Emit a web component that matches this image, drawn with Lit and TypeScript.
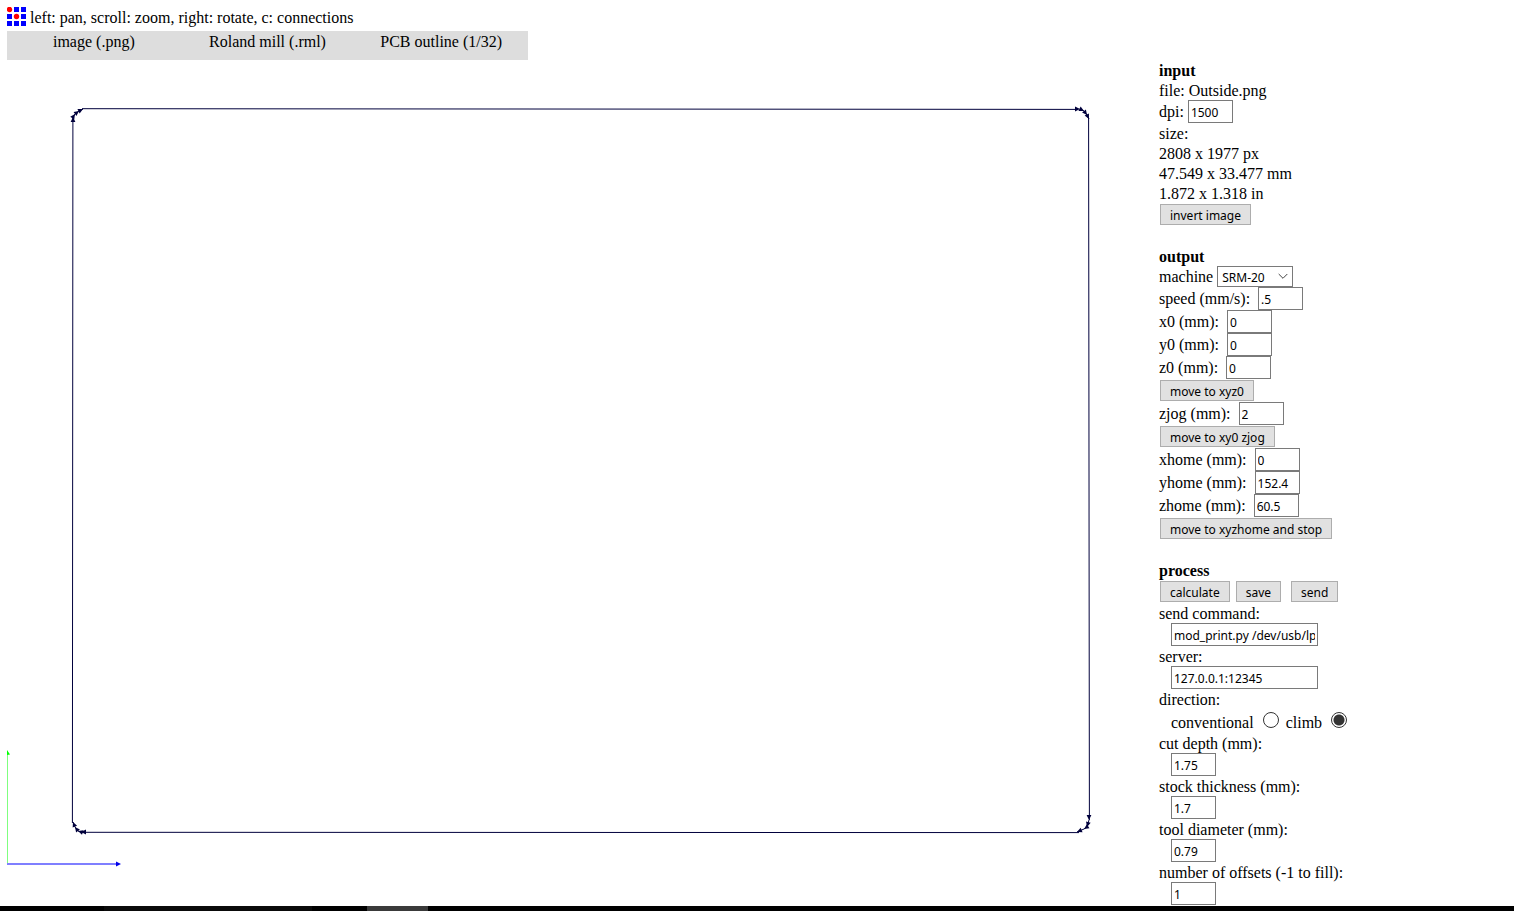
import { LitElement, html, css, svg } from "lit";
import { customElement, state } from "lit/decorators.js";

type Point = [number, number];

const LOGO_CELLS = [0, 1, 2, 3, 4, 5, 6, 7, 8];

// Toolpath corners in travel order: up the left side, then clockwise.
const CORNERS: Point[][] = [
  [[73, 117], [75, 114], [79, 111], [83, 109]],
  [[1080, 109], [1084, 111], [1087, 115], [1089, 119]],
  [[1089, 820], [1087, 827], [1084, 829], [1077, 832]],
  [[81, 832], [78, 831], [75, 827], [73, 822]],
];

function head(from: Point, to: Point, size = 4, half = 2) {
  const dx = to[0] - from[0];
  const dy = to[1] - from[1];
  const len = Math.hypot(dx, dy) || 1;
  const ux = dx / len;
  const uy = dy / len;
  const bx = to[0] - ux * size;
  const by = to[1] - uy * size;
  return `${to[0]},${to[1]} ${bx - uy * half},${by + ux * half} ${bx + uy * half},${by - ux * half}`;
}

@customElement("mods-toolpath")
export class ModsToolpath extends LitElement {
  static styles = css`
    :host { display: block; }
    svg { display: block; width: 100%; height: auto; }
    .path { stroke: #00003c; stroke-width: 1; fill: none; }
    .head { fill: #00003c; }
    .up { stroke: #7fff7f; }
    .up-head { fill: #00ff00; }
    .across { stroke: #7f7fff; stroke-width: 2; }
    .across-head { fill: #0000e8; }
  `;

  render() {
    const points = CORNERS.flat();
    const closed = [...points, points[0]];
    return html`
      <svg viewBox="7 60 1152 846" role="img" aria-label="toolpath">
        <line class="up" x1="7.5" y1="864" x2="7.5" y2="752"></line>
        <polygon class="up-head" points="7,750 10,754.5 7,755"></polygon>
        <line class="across" x1="7" y1="864" x2="118" y2="864"></line>
        <polygon class="across-head" points="121,864 116,861.5 116,866.5"></polygon>
        <polyline class="path" points="82,108.7 1078,109.4"></polyline>
        <polyline class="path" points="1088.6,118 1089.4,820"></polyline>
        <polyline class="path" points="1079,832.6 82,832.3"></polyline>
        <polyline class="path" points="72.4,823 72.9,118"></polyline>
        ${CORNERS.map((c) => svg`<polyline class="path" points=${c.map((p) => p.join(",")).join(" ")}></polyline>`)}
        ${points.map((p, i) => {
          const prev = closed[(i + points.length - 1) % points.length];
          return svg`<polygon class="head" points=${head(prev, p, 5, 2.4)}></polygon>`;
        })}
      </svg>
    `;
  }
}

@customElement("app-root")
export class AppRoot extends LitElement {
  static styles = css`
    :host {
      display: flex;
      flex-direction: column;
      height: 100vh;
      overflow: hidden;
      background: #fff;
      color: #000;
      font: 16px/20px "Liberation Serif", "Times New Roman", serif;
    }
    * { box-sizing: border-box; }
    header { padding: 7px 7px 0; }
    .hint { display: flex; gap: 4px; height: 24px; }
    .hint p { padding-top: 1px; line-height: 20px; }
    .logo { width: 19px; height: 19px; flex: none; }
    .tabs {
      display: grid;
      grid-template-columns: repeat(3, 1fr);
      width: 521px;
      max-width: 100%;
      height: 29px;
      background: #ddd;
    }
    .tab {
      border: 0;
      padding: 1px 0 8px;
      background: none;
      color: inherit;
      font: inherit;
    }
    main { flex: 1; min-height: 0; display: flex; padding-left: 7px; overflow: hidden; }
    mods-toolpath { flex: 1; min-width: 0; }
    .panel { flex: none; width: 355px; display: flex; flex-direction: column; gap: 20px; }
    h2, p { margin: 0; font-size: 16px; }
    .panel h2, .panel p, .block label { padding-top: 2px; line-height: 18px; }
    .row { display: flex; align-items: center; white-space: pre; }
    .near { gap: 4px; }
    .wide { gap: 8px; }
    input[type="text"], select, .btn {
      font: 12px/17px "Noto Sans", "Open Sans", sans-serif;
      color: #000;
      border-radius: 0;
      margin: 0;
    }
    input[type="text"] {
      width: 45px;
      height: 23px;
      padding: 2px 2px 0;
      border: 1px solid #7a7a7a;
      background: #fff;
    }
    input[type="text"].long { width: 147px; }
    .block label { display: block; }
    .block input[type="text"] { display: block; margin-left: 12px; }
    .pick { position: relative; display: flex; }
    select {
      appearance: none;
      width: 76px;
      height: 21px;
      padding: 1px 4px 0;
      border: 1px solid #7a7a7a;
      background: #fff;
    }
    .chevron { position: absolute; right: 5px; top: 7px; width: 10px; height: 7px; pointer-events: none; }
    .buttons { display: flex; padding: 1px 0 1px 1px; }
    .btn {
      height: 21px;
      padding: 2px 9px 0;
      border: 1px solid #adadad;
      background: #e1e1e1;
    }
    .btn.save { margin-left: 6px; }
    .btn.send { margin-left: 10px; }
    .radios { display: flex; align-items: flex-end; height: 24px; padding-left: 12px; }
    .radios input {
      appearance: none;
      width: 16px;
      height: 16px;
      margin: 0 7px 5px 9px;
      border: 1px solid #333;
      border-radius: 50%;
      background: #fff;
    }
    .radios input:checked { background: radial-gradient(circle, #333 5px, #fff 6px); }
    footer { flex: none; display: flex; height: 5px; background: #000; }
    .search { margin-left: 104px; width: 208px; background: #0a0a0a; }
    .active { margin-left: 55px; width: 61px; background: #3a3a3a; }
  `;

  @state() private direction = "climb";

  private field(id: string, label: string, value: string, gap = "wide") {
    return html`<div class="row ${gap}"><label for=${id}>${label}</label><input id=${id} type="text" .value=${value} /></div>`;
  }

  private block(id: string, label: string, value: string, size = "") {
    return html`<div class="block"><label for=${id}>${label}</label><input class=${size} id=${id} type="text" .value=${value} /></div>`;
  }

  private button(label: string) {
    return html`<div class="buttons"><button class="btn" type="button">${label}</button></div>`;
  }

  private radio(name: string) {
    return html`<label for=${name}>${name}</label><input type="radio" name="direction" id=${name}
      .checked=${this.direction === name} @change=${() => (this.direction = name)} />`;
  }

  render() {
    return html`
      <header>
        <div class="hint">
          <svg class="logo" viewBox="0 0 19 19" aria-hidden="true">
            ${LOGO_CELLS.map((i) => {
              const x = (i % 3) * 7;
              const y = Math.floor(i / 3) * 7;
              return i === 0 || i === 4
                ? svg`<circle cx=${x + 2.5} cy=${y + 2.5} r="2.7" fill="#f00"></circle>`
                : svg`<rect x=${x} y=${y} width="5" height="5" fill="#00f"></rect>`;
            })}
          </svg>
          <p>left: pan, scroll: zoom, right: rotate, c: connections</p>
        </div>
        <nav class="tabs">
          <button class="tab" type="button">image (.png)</button>
          <button class="tab" type="button">Roland mill (.rml)</button>
          <button class="tab" type="button">PCB outline (1/32)</button>
        </nav>
      </header>
      <main>
        <mods-toolpath></mods-toolpath>
        <form class="panel">
          <section>
            <h2>input</h2>
            <p>file: Outside.png</p>
            ${this.field("dpi", "dpi:", "1500", "near")}
            <p>size:</p>
            <p>2808 x 1977 px</p>
            <p>47.549 x 33.477 mm</p>
            <p>1.872 x 1.318 in</p>
            ${this.button("invert image")}
          </section>
          <section>
            <h2>output</h2>
            <div class="row near">
              <label for="machine">machine</label><span class="pick"><select id="machine"><option>SRM-20</option></select><svg class="chevron" viewBox="0 0 10 7" aria-hidden="true"><path d="M.7 1 5 5.3 9.3 1" fill="none" stroke="#444"></path></svg></span>
            </div>
            ${this.field("speed", "speed (mm/s):", ".5")}
            ${this.field("x0", "x0 (mm):", "0")}
            ${this.field("y0", "y0 (mm):", "0")}
            ${this.field("z0", "z0 (mm):", "0")}
            ${this.button("move to xyz0")}
            ${this.field("zjog", "zjog (mm):", "2")}
            ${this.button("move to xy0 zjog")}
            ${this.field("xhome", "xhome (mm):", "0")}
            ${this.field("yhome", "yhome (mm):", "152.4")}
            ${this.field("zhome", "zhome (mm):", "60.5")}
            ${this.button("move to xyzhome and stop")}
          </section>
          <section>
            <h2>process</h2>
            <div class="buttons">
              <button class="btn" type="button">calculate</button>
              <button class="btn save" type="button">save</button>
              <button class="btn send" type="button">send</button>
            </div>
            ${this.block("command", "send command:", "mod_print.py /dev/usb/lp0", "long")}
            ${this.block("server", "server:", "127.0.0.1:12345", "long")}
            <p>direction:</p>
            <div class="radios">${this.radio("conventional")}${this.radio("climb")}</div>
            ${this.block("depth", "cut depth (mm):", "1.75")}
            ${this.block("thickness", "stock thickness (mm):", "1.7")}
            ${this.block("diameter", "tool diameter (mm):", "0.79")}
            ${this.block("offsets", "number of offsets (-1 to fill):", "1")}
          </section>
        </form>
      </main>
      <footer><span class="search"></span><span class="active"></span></footer>
    `;
  }
}
